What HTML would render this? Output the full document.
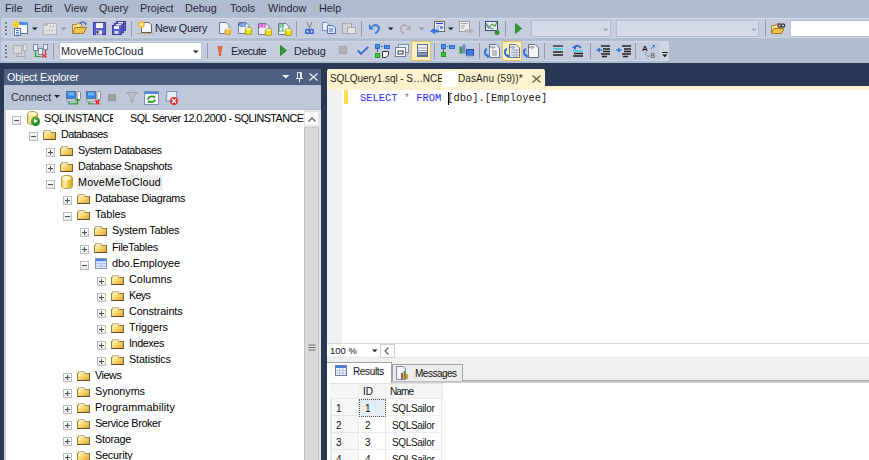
<!DOCTYPE html>
<html><head><meta charset="utf-8">
<style>
*{box-sizing:border-box}
html,body{margin:0;padding:0}
body{width:869px;height:460px;overflow:hidden;position:relative;background:#B0BCD0;font-family:"Liberation Sans",sans-serif;font-size:11px;color:#1E1E1E}
.a{position:absolute}
.t{position:absolute;white-space:pre;line-height:16px}
.grip{position:absolute;width:2px;height:2px;background:#6F7C96}
.sep{position:absolute;width:1px;background:#9AA5BF}
.dd{position:absolute;width:0;height:0;border-left:3px solid transparent;border-right:3px solid transparent;border-top:3px solid #1E1E1E}
.dd.g{border-top-color:#8A94A8}
.exp{position:absolute;width:9px;height:9px;border:1px solid #BEBEBE;background:linear-gradient(#fff,#e6e6e6)}
.exp:before{content:"";position:absolute;left:1px;top:3px;width:5px;height:1px;background:#505050}
.exp.p:after{content:"";position:absolute;left:3px;top:1px;width:1px;height:5px;background:#505050}
.fold{position:absolute;width:13px;height:8.5px;border:1px solid #9C8040;border-bottom-color:#5E4D22;border-right-color:#7A6430;background:linear-gradient(135deg,#FFF0B0,#F3CC5E 55%,#DDA83A)}
.fold:before{content:"";position:absolute;left:0px;top:-2.5px;width:5px;height:2px;border:1px solid #C8B47C;border-bottom:none;background:#F4E6B8}
.tt{position:absolute;white-space:pre;line-height:16px;color:#000;font-size:10.8px}
.cyl{position:absolute;width:11px;height:14px;border-radius:5px/3px;border:1px solid #B59A4A;background:linear-gradient(90deg,#F2D36A,#FBEFB0 35%,#F0C850 60%,#D9A21A)}
.cyl:before{content:"";position:absolute;left:0;top:0;width:9px;height:4px;border-radius:50%;background:#FCF2C2}
</style></head><body>
<span class="t" style="left:5px;top:0px;color:#25253A;font-size:10.8px">File</span>
<span class="t" style="left:34px;top:0px;color:#25253A;font-size:10.8px">Edit</span>
<span class="t" style="left:64px;top:0px;color:#25253A;font-size:10.8px">View</span>
<span class="t" style="left:99px;top:0px;color:#25253A;font-size:10.8px">Query</span>
<span class="t" style="left:140px;top:0px;color:#25253A;font-size:10.8px">Project</span>
<span class="t" style="left:185px;top:0px;color:#25253A;font-size:10.8px">Debug</span>
<span class="t" style="left:230px;top:0px;color:#25253A;font-size:10.8px">Tools</span>
<span class="t" style="left:268px;top:0px;color:#25253A;font-size:10.8px">Window</span>
<span class="t" style="left:319px;top:0px;color:#25253A;font-size:10.8px">Help</span>
<div class="a" style="left:1px;top:18px;width:868px;height:20px;background:#C4CCDD;border-radius:3px 0 0 3px;border-top:1px solid #D2D8E5;border-bottom:1px solid #CCD3E1"></div>
<div class="a" style="left:1px;top:41px;width:668px;height:20px;background:#C4CCDD;border-radius:3px;border-top:1px solid #D2D8E5;border-bottom:1px solid #CCD3E1"></div>
<div class="a" style="left:660px;top:41px;width:9px;height:20px;background:#D0D6E4;border-radius:0 3px 3px 0"></div>
<div class="grip" style="left:5px;top:22px"></div>
<div class="grip" style="left:5px;top:26px"></div>
<div class="grip" style="left:5px;top:29px"></div>
<div class="grip" style="left:5px;top:33px"></div>
<div class="grip" style="left:5px;top:45px"></div>
<div class="grip" style="left:5px;top:49px"></div>
<div class="grip" style="left:5px;top:52px"></div>
<div class="grip" style="left:5px;top:56px"></div>
<svg class="a" style="left:12px;top:20px" width="16" height="16" viewBox="0 0 16 16">
<rect x="5.5" y="2.5" width="10" height="11" fill="#F3F6FB" stroke="#5F739A"/>
<rect x="5" y="2" width="11" height="3" fill="#4D8AE6"/>
<circle cx="4" cy="4.5" r="3.2" fill="#FFE36A"/><path d="M4 0V9M0 4.5H8M1 1.5L7 7.5M7 1.5L1 7.5" stroke="#F5C000" stroke-width="0.8"/>
<rect x="2.5" y="8.5" width="6" height="7" fill="#fff" stroke="#5872A6"/>
<path d="M4 10.5H7M4 12.5H7M4 14H7" stroke="#4D7FD6"/></svg>
<svg class="a" style="left:32px;top:27px" width="6" height="4" viewBox="0 0 6 4"><path d="M0 0.5H5.5L2.75 3.2Z" fill="#1E1E1E"/></svg>
<svg class="a" style="left:43px;top:23px" width="14" height="12" viewBox="0 0 14 12"><rect x="0.5" y="0.5" width="13" height="11" fill="#E2E2E2" stroke="#B4B4B4"/><path d="M3 7.5h1M6 7.5h1M9 7.5h1M7 3.5h1M10 3.5h1M1 2h4" stroke="#8F8F8F"/></svg>
<svg class="a" style="left:61px;top:27px" width="6" height="4" viewBox="0 0 6 4"><path d="M0 0.5H5.5L2.75 3.2Z" fill="#8A94A8"/></svg>
<svg class="a" style="left:72px;top:21px" width="15" height="13" viewBox="0 0 15 13">
<path d="M0.5 3.5H4.5L5.5 2H9.5V12.5H0.5Z" fill="#F6DE8C" stroke="#9E8440"/>
<path d="M0.5 12.5L3 6.5H14.5L11.5 12.5Z" fill="#F2C24A" stroke="#A07C28"/>
<path d="M8 3C9 0.5 12 0 13.5 2.5" fill="none" stroke="#3C6CC0" stroke-width="1.2"/><path d="M12 2.5L14.5 1.5L14 4.5Z" fill="#3C6CC0"/></svg>
<svg class="a" style="left:93px;top:22px" width="13" height="13" viewBox="0 0 13 13"><rect x="0.5" y="0.5" width="12" height="12" fill="#5B5FD0" stroke="#3E3FA0"/><rect x="3" y="1" width="7" height="5" fill="#F4F4FA"/><rect x="3" y="8.5" width="6" height="4" fill="#E8E8F2"/><rect x="3.5" y="9" width="2" height="2.5" fill="#222"/></svg>
<svg class="a" style="left:112px;top:21px" width="14" height="14" viewBox="0 0 14 14">
<rect x="4.5" y="0.5" width="9" height="9" fill="#5D60CF" stroke="#3E3FA0"/>
<rect x="2.5" y="2.5" width="9" height="9" fill="#5D60CF" stroke="#3E3FA0"/>
<rect x="0.5" y="4.5" width="9" height="9" fill="#5D60CF" stroke="#3E3FA0"/>
<rect x="6" y="1" width="5" height="1.5" fill="#E8E8F6"/><rect x="4" y="3" width="5" height="1.5" fill="#E8E8F6"/>
<rect x="2" y="5" width="5" height="3" fill="#F4F4FA"/><rect x="2.5" y="10" width="4" height="3" fill="#D8D8E6"/></svg>
<div class="a" style="left:131px;top:21px;width:1px;height:16px;background:#8F9AB4"></div>
<svg class="a" style="left:137px;top:20px" width="16" height="15" viewBox="0 0 16 15">
<path d="M4.5 2.5H12L14.5 5V12.5H4.5Z" fill="#F8F8FA" stroke="#555E6E"/>
<circle cx="4.5" cy="4.5" r="3.3" fill="#FFB32A"/><circle cx="4.5" cy="4.5" r="1.8" fill="#FFF1A0"/>
<path d="M0 13.5H16" stroke="#C09030" stroke-width="1.2" stroke-dasharray="1.5 1"/><circle cx="8" cy="13.5" r="1" fill="#D8A020"/></svg>
<span class="t" style="left:155px;top:20px;font-size:10.8px;letter-spacing:-0.2px;color:#1B1B30">New Query</span>
<svg class="a" style="left:219px;top:22px" width="12" height="13" viewBox="0 0 12 13">
<path d="M0.5 0.5H7L10 3.5V11.5H0.5Z" fill="#F2F5FB" stroke="#6B7890"/>
<rect x="6" y="6.5" width="6" height="6.3" rx="3" ry="1.3" fill="#F2BE3C" stroke="#B08A2A" stroke-width="0.7"/><ellipse cx="9" cy="7" rx="2.7" ry="1.1" fill="#FBE9A8"/></svg>
<svg class="a" style="left:237px;top:21px" width="15" height="14" viewBox="0 0 15 14">
<path d="M1.5 1.5H9L12 4.5V12.5H1.5Z" fill="#F2F5FB" stroke="#6B7890"/>
<text x="1" y="6" font-family="Liberation Mono" font-size="4.5" font-weight="bold" fill="#2060C0">MDX</text>
<rect x="8.3" y="6.8" width="6.4" height="7" rx="3.2" ry="1.5" fill="#F0DA10" stroke="#8C8400" stroke-width="0.7"/><ellipse cx="11.5" cy="8.2" rx="2.6" ry="1.1" fill="#FFF8A0"/></svg>
<svg class="a" style="left:257px;top:22px" width="15" height="14" viewBox="0 0 15 14">
<path d="M1.5 1.5H9L12 4.5V12.5H1.5Z" fill="#F2F5FB" stroke="#6B7890"/>
<text x="1" y="6" font-family="Liberation Mono" font-size="4.5" font-weight="bold" fill="#D020C0">DMX</text>
<rect x="8.3" y="6.8" width="6.4" height="7" rx="3.2" ry="1.5" fill="#F0DA10" stroke="#8C8400" stroke-width="0.7"/><ellipse cx="11.5" cy="8.2" rx="2.6" ry="1.1" fill="#FFF8A0"/></svg>
<svg class="a" style="left:277px;top:22px" width="15" height="14" viewBox="0 0 15 14">
<path d="M1.5 1.5H9L12 4.5V12.5H1.5Z" fill="#F2F5FB" stroke="#6B7890"/>
<text x="1.5" y="5.5" font-family="Liberation Mono" font-size="4.5" font-weight="bold" fill="#30A050">XM</text>
<text x="1.5" y="10" font-family="Liberation Mono" font-size="4.5" font-weight="bold" fill="#30A050">LA</text>
<rect x="8.3" y="6.8" width="6.4" height="7" rx="3.2" ry="1.5" fill="#F0DA10" stroke="#8C8400" stroke-width="0.7"/><ellipse cx="11.5" cy="8.2" rx="2.6" ry="1.1" fill="#FFF8A0"/></svg>
<div class="a" style="left:296px;top:21px;width:1px;height:16px;background:#8F9AB4"></div>
<svg class="a" style="left:305px;top:22px" width="9" height="12" viewBox="0 0 9 12"><path d="M2 0L5 7M7 0L4 7" stroke="#8C8C8C" stroke-width="1.2"/><circle cx="2.5" cy="9.5" r="2" fill="none" stroke="#3A5CC8" stroke-width="1.5"/><circle cx="6.5" cy="9.5" r="2" fill="none" stroke="#3A5CC8" stroke-width="1.5"/></svg>
<svg class="a" style="left:322px;top:22px" width="14" height="12" viewBox="0 0 14 12"><path d="M0.5 0.5H5L7 2.5V8.5H0.5Z" fill="#E8EEF8" stroke="#7C90B8"/><path d="M5.5 3.5H11L13.5 6V11.5H5.5Z" fill="#DCE6F8" stroke="#4A6EC0"/><path d="M7 7H11M7 9H11" stroke="#4A6EC0"/></svg>
<svg class="a" style="left:342px;top:22px" width="14" height="12" viewBox="0 0 14 12"><rect x="0.5" y="1.5" width="9" height="10" fill="#D4D4D4" stroke="#A4A4A4"/><rect x="3" y="0.5" width="4" height="2" fill="#BDBDBD"/><rect x="5.5" y="5.5" width="8" height="6" fill="#E6E6E6" stroke="#A8A8A8"/></svg>
<div class="a" style="left:361px;top:21px;width:1px;height:16px;background:#8F9AB4"></div>
<svg class="a" style="left:369px;top:22px" width="11" height="12" viewBox="0 0 11 12"><path d="M3 4.5C7 1.5 11 4 9.5 8C9 9.5 7.5 11 6 11.5" fill="none" stroke="#3B7BDC" stroke-width="2"/><path d="M0 2V7.5H5Z" fill="#3B7BDC"/></svg>
<svg class="a" style="left:388px;top:27px" width="6" height="4" viewBox="0 0 6 4"><path d="M0 0.5H5.5L2.75 3.2Z" fill="#1E1E1E"/></svg>
<svg class="a" style="left:399px;top:22px" width="12" height="12" viewBox="0 0 12 12"><path d="M8.5 4.5C5 1.5 1 4 2 8C2.5 9.5 3.5 11 5 11.5" fill="none" stroke="#A8A8A8" stroke-width="1.6"/><path d="M11.5 3V8H6.5Z" fill="#A8A8A8"/></svg>
<svg class="a" style="left:419px;top:27px" width="6" height="4" viewBox="0 0 6 4"><path d="M0 0.5H5.5L2.75 3.2Z" fill="#8A94A8"/></svg>
<svg class="a" style="left:430px;top:21px" width="15" height="14" viewBox="0 0 15 14"><rect x="4.5" y="0.5" width="10" height="10" fill="#F4F6FA" stroke="#6C6A5C"/><path d="M6 2.5H13" stroke="#2040E0" stroke-width="1.2"/><path d="M6 5H10M6 7H9" stroke="#8CA0C0"/><rect x="10" y="5" width="3" height="3" fill="#6C8CE8"/><path d="M0 10L5 6.5V8.5H9V11.5H5V13.5Z" fill="#3E70D8"/></svg>
<svg class="a" style="left:448px;top:27px" width="6" height="4" viewBox="0 0 6 4"><path d="M0 0.5H5.5L2.75 3.2Z" fill="#1E1E1E"/></svg>
<svg class="a" style="left:459px;top:21px" width="15" height="14" viewBox="0 0 15 14"><rect x="0.5" y="0.5" width="10" height="10" fill="#ECECEC" stroke="#A0A0A0"/><path d="M2 2.5H9M2 5H6M2 7H5" stroke="#A8A8A8"/><path d="M15 10L10 6.5V8.5H6V11.5H10V13.5Z" fill="#B6B6B6"/></svg>
<div class="a" style="left:479px;top:21px;width:1px;height:16px;background:#8F9AB4"></div>
<svg class="a" style="left:485px;top:21px" width="15" height="14" viewBox="0 0 15 14"><rect x="0.5" y="0.5" width="12" height="9" fill="#E6EEF8" stroke="#3A4A70"/><path d="M1 4L4 7L7 3L10 5L12 1" fill="none" stroke="#5BA030" stroke-width="1.2"/><path d="M1 2L5 7L9 8" fill="none" stroke="#5E90E0" stroke-width="1.2"/><circle cx="12" cy="11.5" r="2.5" fill="#3C9030"/></svg>
<div class="a" style="left:505px;top:21px;width:1px;height:16px;background:#8F9AB4"></div>
<svg class="a" style="left:515px;top:23px" width="7" height="11" viewBox="0 0 7 11"><path d="M0.5 0.5L6.5 5.5L0.5 10.5Z" fill="#2E9B2E" stroke="#1E7A1E" stroke-width="0.8"/></svg>
<div class="a" style="left:531px;top:20px;width:80px;height:17px;background:#D4DAE7;border:1px solid #B4BDD0"></div>
<svg class="a" style="left:603px;top:28px" width="6" height="4" viewBox="0 0 6 4"><path d="M0 0.5H5.5L2.75 3.2Z" fill="#9CA4B4"/></svg>
<div class="a" style="left:616px;top:20px;width:143px;height:17px;background:#D4DAE7;border:1px solid #B4BDD0"></div>
<svg class="a" style="left:751px;top:28px" width="6" height="4" viewBox="0 0 6 4"><path d="M0 0.5H5.5L2.75 3.2Z" fill="#9CA4B4"/></svg>
<div class="a" style="left:765px;top:20px;width:1px;height:17px;background:#8F9AB4"></div>
<svg class="a" style="left:771px;top:21px" width="15" height="13" viewBox="0 0 15 13"><path d="M0.5 4.5H4L5 3H9V12.5H0.5Z" fill="#F6DE8C" stroke="#9E8440"/><path d="M0.5 12.5L2.5 7.5H13L10.5 12.5Z" fill="#F2C24A" stroke="#A07C28"/><circle cx="8.5" cy="4.5" r="2.3" fill="#3A3A3A"/><circle cx="12" cy="4.5" r="2.3" fill="#3A3A3A"/><circle cx="8.5" cy="4.5" r="1" fill="#ddd"/><circle cx="12" cy="4.5" r="1" fill="#ddd"/></svg>
<div class="a" style="left:790px;top:20px;width:79px;height:17px;background:#fff;border:1px solid #B8C0D0;border-right:none"></div>
<svg class="a" style="left:13px;top:44px" width="15" height="14" viewBox="0 0 15 14"><rect x="0.5" y="1.5" width="8" height="8" fill="#D8D8D8" stroke="#B0B0B0"/><rect x="10.5" y="0.5" width="3" height="6" fill="#E4E4E4" stroke="#B0B0B0"/><path d="M4 9.5V12.5H12V6.5" fill="none" stroke="#A8A8A8"/></svg>
<svg class="a" style="left:33px;top:44px" width="15" height="14" viewBox="0 0 15 14"><rect x="0.5" y="0.5" width="4" height="6" fill="#F2F2F2" stroke="#7A8AA0"/><rect x="5.5" y="4.5" width="4" height="6" fill="#F2F2F2" stroke="#7A8AA0"/><rect x="10.5" y="0.5" width="4" height="5" fill="#F2F2F2" stroke="#7A8AA0"/><path d="M2.5 7V12.5H8" fill="none" stroke="#2E9E2E" stroke-width="1.2"/><path d="M9 10L13.5 13.5M13.5 10L9 13.5M12.5 6V10" stroke="#E02020" stroke-width="1.2"/></svg>
<div class="a" style="left:53px;top:43px;width:1px;height:16px;background:#8F9AB4"></div>
<div class="a" style="left:59px;top:42px;width:143px;height:18px;background:#fff;border:1px solid #B8C0D0"></div>
<span class="t" style="left:61px;top:43px;font-size:10.8px;letter-spacing:0.1px;color:#1B1B30">MoveMeToCloud</span>
<svg class="a" style="left:193px;top:50px" width="6" height="4" viewBox="0 0 6 4"><path d="M0 0.5H5.5L2.75 3.2Z" fill="#1E1E1E"/></svg>
<div class="a" style="left:207px;top:43px;width:1px;height:16px;background:#8F9AB4"></div>
<svg class="a" style="left:217px;top:46px" width="6" height="10" viewBox="0 0 6 10"><path d="M0.8 0.5H5.2L3.7 6.8H2.3Z" fill="#F2672E" stroke="#D24A1A" stroke-width="0.5"/><circle cx="3" cy="8.6" r="1.3" fill="#E8501E"/></svg>
<span class="t" style="left:231px;top:43px;font-size:10.8px;letter-spacing:-0.6px;color:#1B1B30">Execute</span>
<svg class="a" style="left:280px;top:45px" width="7" height="11" viewBox="0 0 7 11"><path d="M0.5 0.5L6.5 5.5L0.5 10.5Z" fill="#2E9B2E" stroke="#1E7A1E" stroke-width="0.8"/></svg>
<span class="t" style="left:294px;top:43px;font-size:10.8px;color:#1B1B30">Debug</span>
<svg class="a" style="left:339px;top:46px" width="8" height="8" viewBox="0 0 8 8"><rect x="0.5" y="0.5" width="7" height="7" fill="#B2B2B2" stroke="#A4A4A4"/></svg>
<svg class="a" style="left:357px;top:46px" width="12" height="9" viewBox="0 0 12 9"><path d="M0.8 4.5L4 7.8L11.2 0.8" fill="none" stroke="#3A68C8" stroke-width="1.8"/></svg>
<svg class="a" style="left:375px;top:44px" width="15" height="14" viewBox="0 0 15 14"><rect x="0.5" y="0.5" width="4" height="4" fill="#4A90E0" stroke="#2E6CC0"/><rect x="9.5" y="1.5" width="5" height="3" fill="#4A90E0" stroke="#2E6CC0"/><path d="M6 2.5H8" stroke="#2E6CC0"/><path d="M2.5 5V8" stroke="#555"/><rect x="0.5" y="9.5" width="4" height="4" fill="#33CC33" stroke="#229922"/><path d="M7.5 7.5H13.5V11L10.5 13.5H7.5Z" fill="#F8F8F8" stroke="#333"/></svg>
<svg class="a" style="left:395px;top:44px" width="14" height="13" viewBox="0 0 14 13"><rect x="3.5" y="0.5" width="10" height="8" fill="#E8EEF8" stroke="#7A8CAC"/><rect x="0.5" y="3.5" width="10" height="9" fill="#F4F6FA" stroke="#6A7C9C"/><rect x="3" y="7" width="5" height="3" fill="#fff" stroke="#333"/></svg>
<div class="a" style="left:411px;top:41px;width:20px;height:20px;background:#FFF0C0;border:1px solid #E8C060"></div>
<svg class="a" style="left:417px;top:44px" width="11" height="13" viewBox="0 0 11 13"><rect x="0.5" y="0.5" width="10" height="12" fill="#F4F6FA" stroke="#5A6C90"/><path d="M1 4H10M1 6.5H10" stroke="#9AA6C0"/><rect x="1" y="8" width="9" height="4" fill="#5A6C90"/><path d="M1 10H10" stroke="#C0C8DA"/></svg>
<div class="a" style="left:434px;top:43px;width:1px;height:16px;background:#8F9AB4"></div>
<svg class="a" style="left:441px;top:44px" width="14" height="13" viewBox="0 0 14 13"><rect x="0.5" y="0.5" width="4" height="4" fill="#4A90E0" stroke="#2E6CC0"/><rect x="8.5" y="1.5" width="5" height="3" fill="#4A90E0" stroke="#2E6CC0"/><path d="M6 2.5H7.5" stroke="#2E6CC0"/><path d="M2.5 5V8" stroke="#555"/><rect x="0.5" y="8.5" width="4" height="4" fill="#33CC33" stroke="#229922"/></svg>
<svg class="a" style="left:459px;top:44px" width="15" height="14" viewBox="0 0 15 14"><rect x="0.5" y="2.5" width="3" height="7" fill="#3A9A3A"/><rect x="3.5" y="0.5" width="3" height="9" fill="#6A8AD0"/><rect x="7.5" y="5.5" width="7" height="6" fill="#3C7CE8" stroke="#2A4A90"/><rect x="6.5" y="11.5" width="8" height="2" fill="#A8B8D0"/></svg>
<div class="a" style="left:479px;top:43px;width:1px;height:16px;background:#8F9AB4"></div>
<svg class="a" style="left:484px;top:44px" width="16" height="14" viewBox="0 0 16 14"><path d="M5.5 0.5H12L15.5 4V13.5H5.5Z" fill="#F2F4F8" stroke="#6A7484"/><text x="5.5" y="4" font-family="Liberation Mono" font-size="3.5" fill="#333">SQL</text><path d="M8 7H13M8 9H13M8 11H13" stroke="#888"/><path d="M3 5C0 6 0 11 4 12" fill="none" stroke="#3070D8" stroke-width="2"/><path d="M3 10L6.5 12.5L3 14Z" fill="#3070D8"/></svg>
<div class="a" style="left:502px;top:41px;width:20px;height:20px;background:#FFF0C0;border:1px solid #E8C060"></div>
<svg class="a" style="left:504px;top:44px" width="16" height="14" viewBox="0 0 16 14"><path d="M5.5 0.5H12L15.5 4V13.5H5.5Z" fill="#F2F4F8" stroke="#6A7484"/><text x="5.5" y="4" font-family="Liberation Mono" font-size="3.5" fill="#333">SQL</text><path d="M7 6H15M7 8.5H15M7 11H15M10 5V13M12.5 5V13" stroke="#9AA8C8"/><path d="M3 5C0 6 0 11 4 12" fill="none" stroke="#3070D8" stroke-width="2"/><path d="M3 10L6.5 12.5L3 14Z" fill="#3070D8"/></svg>
<svg class="a" style="left:523px;top:44px" width="16" height="14" viewBox="0 0 16 14"><path d="M5.5 0.5H12L15.5 4V13.5H5.5Z" fill="#F2F4F8" stroke="#6A7484"/><text x="5.5" y="4" font-family="Liberation Mono" font-size="3.5" fill="#333">SQL</text><path d="M3 5C0 6 0 11 4 12" fill="none" stroke="#3070D8" stroke-width="2"/><path d="M3 10L6.5 12.5L3 14Z" fill="#3070D8"/></svg>
<div class="a" style="left:544px;top:43px;width:1px;height:16px;background:#8F9AB4"></div>
<svg class="a" style="left:552px;top:45px" width="12" height="11" viewBox="0 0 12 11"><path d="M1 1H11" stroke="#222" stroke-width="1.3"/><path d="M1 4H11" stroke="#20D0E0" stroke-width="1.3"/><path d="M1 7H11M1 10H11" stroke="#222" stroke-width="1.3"/></svg>
<svg class="a" style="left:572px;top:45px" width="12" height="12" viewBox="0 0 12 12"><path d="M9 3C7 0 3 0 2 3" fill="none" stroke="#2C60D0" stroke-width="1.6"/><path d="M0 2L3.5 5L4 1Z" fill="#2C60D0"/><path d="M1 6H11" stroke="#20D0E0" stroke-width="1.3"/><path d="M2 8.5H11M1 11H11" stroke="#222" stroke-width="1.3"/></svg>
<div class="a" style="left:590px;top:43px;width:1px;height:16px;background:#8F9AB4"></div>
<svg class="a" style="left:596px;top:45px" width="14" height="13" viewBox="0 0 14 13"><path d="M5 1H14M7 4H14M7 6.5H14M5 9H14M6 11.5H11" stroke="#222" stroke-width="1.4"/><path d="M0 5L4 2.5V7.5Z" fill="#3A7AD8"/><path d="M3 5H6" stroke="#3A7AD8" stroke-width="1.4"/></svg>
<svg class="a" style="left:616px;top:45px" width="15" height="13" viewBox="0 0 15 13"><path d="M6 1H15M8 4H15M8 6.5H15M6 9H15M7 11.5H12" stroke="#222" stroke-width="1.4"/><path d="M6 5L2 2.5V7.5Z" fill="#3A7AD8"/><path d="M0 5H3" stroke="#3A7AD8" stroke-width="1.4"/></svg>
<div class="a" style="left:635px;top:43px;width:1px;height:16px;background:#8F9AB4"></div>
<svg class="a" style="left:642px;top:44px" width="14" height="14" viewBox="0 0 14 14"><text x="0" y="7" font-family="Liberation Sans" font-size="8" font-weight="bold" fill="#222">A</text><path d="M9 5L12 1.5M10.5 1.5H12.5V3.5" stroke="#3A6AC0" fill="none"/><path d="M4 8C3 11 5 13 8 12" fill="none" stroke="#3A6AC0" stroke-dasharray="1 1"/><text x="8.5" y="13.5" font-family="Liberation Sans" font-size="7" fill="#555">B</text></svg>
<div class="a" style="left:662px;top:52px;width:6px;height:1px;background:#1E1E1E"></div>
<svg class="a" style="left:662px;top:54px" width="6" height="4" viewBox="0 0 6 4"><path d="M0 0.5H5.5L2.75 3.2Z" fill="#1E1E1E"/></svg>
<div class="a" style="left:0;top:63px;width:869px;height:397px;background:#293955"></div>
<div class="a" style="left:4px;top:69px;width:317px;height:16px;background:#4D6082"></div>
<span class="t" style="left:7px;top:69px;color:#fff;font-size:10.8px;letter-spacing:-0.18px">Object Explorer</span>
<div class="a" style="left:4px;top:85px;width:317px;height:25px;background:#BEC7D9;border-bottom:1px solid #B9BFCC"></div>
<span class="t" style="left:11px;top:89px;font-size:10.8px;color:#2A3040">Connect</span>
<div class="dd" style="left:54px;top:95px"></div>
<svg class="a" style="left:66px;top:91px" width="15" height="14" viewBox="0 0 15 14"><rect x="0.5" y="0.5" width="9" height="7" fill="#2F86F0" stroke="#5A7090"/><rect x="2" y="1.5" width="6" height="3" fill="#6CB2FF"/><rect x="0.5" y="8" width="9" height="2.5" fill="#C8D0DC" stroke="#8A96A8" stroke-width="0.6"/><rect x="11" y="0.5" width="3.5" height="8" rx="1" fill="#F4F4F4" stroke="#8A8A8A"/><path d="M3 10.5V12.8H11.5V9.5" fill="none" stroke="#2E9E2E" stroke-width="1.3"/><path d="M9 10L11.5 7L14 10Z" fill="#2E9E2E"/></svg>
<svg class="a" style="left:86px;top:91px" width="15" height="14" viewBox="0 0 15 14"><rect x="0.5" y="0.5" width="9" height="7" fill="#2F86F0" stroke="#5A7090"/><rect x="2" y="1.5" width="6" height="3" fill="#6CB2FF"/><rect x="0.5" y="8" width="9" height="2.5" fill="#C8D0DC" stroke="#8A96A8" stroke-width="0.6"/><rect x="11" y="0.5" width="3.5" height="8" rx="1" fill="#F4F4F4" stroke="#8A8A8A"/><path d="M3 10.5V12.8H8" fill="none" stroke="#2E9E2E" stroke-width="1.3"/><path d="M9.5 9L13.5 13.5M13.5 9L9.5 13.5" stroke="#F02020" stroke-width="1.5"/></svg>
<svg class="a" style="left:108px;top:94px" width="8" height="7" viewBox="0 0 8 7"><rect x="0.5" y="0.5" width="7" height="6" fill="#A0A0A0" stroke="#969696"/></svg>
<svg class="a" style="left:126px;top:92px" width="12" height="11" viewBox="0 0 12 11"><path d="M0.5 0.5H11.5L7 5V10.5H5V5Z" fill="#BFC3C8" stroke="#A0A4AA"/></svg>
<svg class="a" style="left:144px;top:91px" width="15" height="14" viewBox="0 0 15 14"><rect x="0.5" y="0.5" width="14" height="13" fill="#F8FAFE" stroke="#7890B8"/><rect x="1" y="1" width="13" height="2" fill="#4A88E8"/><path d="M4 8.5C4 5.5 8.5 4.5 10.5 6.5" fill="none" stroke="#3C9A28" stroke-width="1.8"/><path d="M9 5L11.5 4.5L11 7.5Z" fill="#3C9A28"/><path d="M11 8.5C11 11 6.5 12 4.5 10" fill="none" stroke="#3C9A28" stroke-width="1.8"/><path d="M6 11.5L3.5 12L4 9Z" fill="#3C9A28"/></svg>
<svg class="a" style="left:164px;top:91px" width="15" height="14" viewBox="0 0 15 14"><path d="M2.5 0.5H13.5C12 2 12 4 13 5L12 10H1.5C3 8 3 3 2.5 0.5Z" fill="#E8EEF6" stroke="#7A90B0"/><circle cx="10" cy="10" r="4" fill="#E03030"/><path d="M8 8L12 12M12 8L8 12" stroke="#fff" stroke-width="1.3"/></svg>
<svg class="a" style="left:282px;top:75px" width="8" height="4" viewBox="0 0 8 4"><path d="M0 0H7.5L3.75 3.5Z" fill="#E8ECF4"/></svg>
<svg class="a" style="left:296px;top:72px" width="7" height="11" viewBox="0 0 7 11"><path d="M1.5 0.5H5.5V6.5H1.5ZM0 6.5H7M3.5 6.5V10.5" fill="none" stroke="#E8ECF4"/><rect x="4" y="1" width="1.5" height="5.5" fill="#E8ECF4"/></svg>
<svg class="a" style="left:309px;top:73px" width="9" height="8" viewBox="0 0 9 8"><path d="M0.5 0.5L8.5 7.5M8.5 0.5L0.5 7.5" stroke="#E8ECF4" stroke-width="1.3"/></svg>
<div class="a" style="left:4px;top:110px;width:317px;height:350px;background:#fff;border-left:2px solid #D0D4DC"></div>
<div class="exp" style="left:12px;top:116px"></div>
<div class="cyl" style="left:27px;top:111px"></div>
<div class="a" style="left:31px;top:117px;width:9px;height:9px;border-radius:50%;background:radial-gradient(circle at 40% 35%,#5DBB4A,#1F8A1F 60%,#0F5E10)"></div>
<div class="a" style="left:34px;top:119px;width:0;height:0;border-top:2.5px solid transparent;border-bottom:2.5px solid transparent;border-left:4px solid #fff"></div>
<div class="a" style="left:44px;top:110px;width:69px;height:16px;overflow:hidden"><span class="tt" style="left:0;top:0;letter-spacing:-0.3px">SQLINSTANCE</span></div>
<span class="tt" style="left:130px;top:110px;letter-spacing:-0.55px">SQL Server 12.0.2000 - SQLINSTANCE</span>
<div class="exp" style="left:29px;top:132px"></div>
<div class="fold" style="left:43px;top:131.5px"></div>
<span class="tt" style="left:61px;top:126px;letter-spacing:-0.56px">Databases</span>
<div class="exp p" style="left:46px;top:148px"></div>
<div class="fold" style="left:60px;top:147.5px"></div>
<span class="tt" style="left:78px;top:142px;letter-spacing:-0.45px">System Databases</span>
<div class="exp p" style="left:46px;top:164px"></div>
<div class="fold" style="left:60px;top:163.5px"></div>
<span class="tt" style="left:78px;top:158px;letter-spacing:-0.35px">Database Snapshots</span>
<div class="exp" style="left:46px;top:180px"></div>
<div class="cyl" style="left:61px;top:175px;width:12px"></div>
<div class="a" style="left:77px;top:175px;width:86px;height:15px;background:#F0F0F0"></div>
<span class="tt" style="left:78px;top:174px;letter-spacing:0.15px">MoveMeToCloud</span>
<div class="exp p" style="left:63px;top:196px"></div>
<div class="fold" style="left:77px;top:195.5px"></div>
<span class="tt" style="left:95px;top:190px;letter-spacing:-0.31px">Database Diagrams</span>
<div class="exp" style="left:63px;top:212px"></div>
<div class="fold" style="left:77px;top:211.5px"></div>
<span class="tt" style="left:95px;top:206px;letter-spacing:-0.08px">Tables</span>
<div class="exp p" style="left:80px;top:228px"></div>
<div class="fold" style="left:94px;top:227.5px"></div>
<span class="tt" style="left:112px;top:222px;letter-spacing:-0.22px">System Tables</span>
<div class="exp p" style="left:80px;top:245px"></div>
<div class="fold" style="left:94px;top:244.5px"></div>
<span class="tt" style="left:112px;top:239px;letter-spacing:-0.28px">FileTables</span>
<div class="exp" style="left:80px;top:261px"></div>
<svg class="a" style="left:95px;top:258px" width="12" height="11" viewBox="0 0 12 11"><rect x="0.5" y="0.5" width="11" height="10" fill="#E4ECFA" stroke="#7F95BE"/><rect x="1" y="1" width="10" height="2.5" fill="#4C82E4"/><path d="M1 5.5H11M1 8H11M6 3.5V10" stroke="#A9BCE0"/><path d="M1 4H11" stroke="#FFFFFF" stroke-width="0.6"/></svg>
<span class="tt" style="left:112px;top:255px;letter-spacing:-0.09px">dbo.Employee</span>
<div class="exp p" style="left:97px;top:277px"></div>
<div class="fold" style="left:111px;top:276.5px"></div>
<span class="tt" style="left:129px;top:271px;letter-spacing:0.05px">Columns</span>
<div class="exp p" style="left:97px;top:293px"></div>
<div class="fold" style="left:111px;top:292.5px"></div>
<span class="tt" style="left:129px;top:287px;letter-spacing:-0.73px">Keys</span>
<div class="exp p" style="left:97px;top:309px"></div>
<div class="fold" style="left:111px;top:308.5px"></div>
<span class="tt" style="left:129px;top:303px;letter-spacing:-0.1px">Constraints</span>
<div class="exp p" style="left:97px;top:325px"></div>
<div class="fold" style="left:111px;top:324.5px"></div>
<span class="tt" style="left:129px;top:319px;letter-spacing:-0.03px">Triggers</span>
<div class="exp p" style="left:97px;top:341px"></div>
<div class="fold" style="left:111px;top:340.5px"></div>
<span class="tt" style="left:129px;top:335px;letter-spacing:-0.42px">Indexes</span>
<div class="exp p" style="left:97px;top:357px"></div>
<div class="fold" style="left:111px;top:356.5px"></div>
<span class="tt" style="left:129px;top:351px;letter-spacing:-0.14px">Statistics</span>
<div class="exp p" style="left:63px;top:373px"></div>
<div class="fold" style="left:77px;top:372.5px"></div>
<span class="tt" style="left:95px;top:367px;letter-spacing:-0.43px">Views</span>
<div class="exp p" style="left:63px;top:389px"></div>
<div class="fold" style="left:77px;top:388.5px"></div>
<span class="tt" style="left:95px;top:383px;letter-spacing:-0.06px">Synonyms</span>
<div class="exp p" style="left:63px;top:405px"></div>
<div class="fold" style="left:77px;top:404.5px"></div>
<span class="tt" style="left:95px;top:399px;letter-spacing:0.13px">Programmability</span>
<div class="exp p" style="left:63px;top:421px"></div>
<div class="fold" style="left:77px;top:420.5px"></div>
<span class="tt" style="left:95px;top:415px;letter-spacing:-0.34px">Service Broker</span>
<div class="exp p" style="left:63px;top:437px"></div>
<div class="fold" style="left:77px;top:436.5px"></div>
<span class="tt" style="left:95px;top:431px;letter-spacing:-0.27px">Storage</span>
<div class="exp p" style="left:63px;top:453px"></div>
<div class="fold" style="left:77px;top:452.5px"></div>
<span class="tt" style="left:95px;top:447px;letter-spacing:-0.2px">Security</span>
<div class="a" style="left:304px;top:110px;width:17px;height:350px;background:#E4E6EC"></div>
<div class="a" style="left:304px;top:111px;width:15px;height:15px;background:#fff;border:1px solid #E4E4E4"></div>
<div class="a" style="left:304px;top:127px;width:15px;height:333px;background:#DADADA;border-left:1px solid #BDBDBD;border-right:1px solid #BDBDBD;border-top:1px solid #C8C8C8"></div>
<svg class="a" style="left:308px;top:116.5px" width="8" height="5" viewBox="0 0 8 5"><path d="M0.5 4.5L4 1L7.5 4.5" fill="none" stroke="#606060" stroke-width="1.3"/></svg>
<svg class="a" style="left:308px;top:343px" width="8" height="9" viewBox="0 0 8 9"><path d="M0.5 2H7.5M0.5 4.5H7.5M0.5 7H7.5" stroke="#6E6E6E" stroke-width="1.2"/></svg>
<div class="a" style="left:327px;top:69px;width:218px;height:18px;background:#FFF3CF;border-radius:2px 2px 0 0"></div>
<div class="a" style="left:327px;top:86px;width:542px;height:4px;background:#FFF3CF"></div>
<div class="a" style="left:327px;top:90px;width:542px;height:253px;background:#fff"></div>
<div class="a" style="left:327px;top:90px;width:15px;height:253px;background:#F0F0F0"></div>
<div class="a" style="left:344px;top:90px;width:4px;height:14px;background:#FFE04A"></div>
<span class="t" style="left:360px;top:90px;font-family:'Liberation Mono',monospace;font-size:10.4px;letter-spacing:0px;color:#222"><span style="color:#2B2BFF">SELECT</span> <span style="color:#808080">*</span> <span style="color:#2B2BFF">FROM</span> [dbo].[Employee]</span>
<span class="t" style="left:330px;top:70.5px;font-size:10px;letter-spacing:-0.06px">SQLQuery1.sql - S…NCE</span>
<div class="a" style="left:442px;top:71px;width:16px;height:16px;background:#fff"></div>
<span class="t" style="left:458px;top:70.5px;font-size:10px;letter-spacing:0.1px">DasAnu (59))*</span>
<svg class="a" style="left:532px;top:75px" width="9" height="8" viewBox="0 0 9 8"><path d="M0.5 0.5L8.5 7.5M8.5 0.5L0.5 7.5" stroke="#6E6446" stroke-width="1.4"/></svg>
<div class="a" style="left:448px;top:92px;width:1px;height:13px;background:#000"></div>
<div class="a" style="left:327px;top:343px;width:542px;height:117px;background:#F0F0F0"></div>
<div class="a" style="left:327px;top:343px;width:542px;height:15px;background:linear-gradient(#fff 0,#fff 12px,#E4E4E4 14px);border-top:1px solid #D6D6D6"></div>
<span class="t" style="left:330px;top:343px;font-size:9.5px;letter-spacing:0px;color:#111">100 %</span>
<svg class="a" style="left:372px;top:349px" width="6" height="4" viewBox="0 0 6 4"><path d="M0 0.5H5.5L2.75 3.2Z" fill="#1E1E1E"/></svg>
<div class="a" style="left:380px;top:344px;width:15px;height:14px;background:#fff;border:1px solid #D0D0D0"></div>
<svg class="a" style="left:384px;top:347px" width="6" height="8" viewBox="0 0 6 8"><path d="M4.5 0.5L1 4L4.5 7.5" fill="none" stroke="#555" stroke-width="1.1"/></svg>
<div class="a" style="left:327px;top:380px;width:542px;height:3px;background:linear-gradient(#A8A8A8,#D8D8D8)"></div>
<div class="a" style="left:392px;top:364px;width:71px;height:17px;background:#ECECEC;border:1px solid #A0A0A0;border-bottom:none"></div>
<div class="a" style="left:327px;top:362px;width:65px;height:21px;background:#fff;border:1px solid #A0A0A0;border-bottom:none;border-left:none"></div>
<svg class="a" style="left:335px;top:365px" width="12" height="11" viewBox="0 0 12 11"><rect x="0.5" y="0.5" width="11" height="10" fill="#F4F6FA" stroke="#6A7AA0"/><rect x="1" y="1" width="10" height="2" fill="#4A7EE0"/><path d="M1 5.5H11M1 8H11M4.5 3V10M8 3V10" stroke="#B4C0D8"/></svg>
<span class="t" style="left:353px;top:364px;font-size:10px;letter-spacing:-0.35px;color:#111">Results</span>
<svg class="a" style="left:396px;top:366px" width="13" height="14" viewBox="0 0 13 14"><path d="M0.5 0.5H7L9.5 3V13.5H0.5Z" fill="#F4F6FA" stroke="#7A8AA8"/><rect x="5" y="7" width="2" height="6" fill="#D84040"/><rect x="7.5" y="5" width="2" height="8" fill="#4AA040"/><rect x="10" y="8" width="2" height="5" fill="#E0A020"/></svg>
<span class="t" style="left:415px;top:366px;font-size:10px;letter-spacing:-0.5px;color:#111">Messages</span>
<div class="a" style="left:327px;top:383px;width:542px;height:77px;background:#fff"></div>
<div class="a" style="left:330px;top:383px;width:2px;height:77px;background:#E4E4E4"></div>
<div class="a" style="left:330px;top:383px;width:113px;height:16px;background:#F5F5F5;border-top:1px solid #E0E0E0;border-bottom:1px solid #E6E6E6"></div>
<div class="a" style="left:358px;top:384px;width:1px;height:76px;background:#E8E8E8"></div>
<div class="a" style="left:385px;top:384px;width:1px;height:76px;background:#E8E8E8"></div>
<div class="a" style="left:441px;top:399px;width:1px;height:61px;background:#E8E8E8"></div>
<div class="a" style="left:442px;top:384px;width:1px;height:15px;background:#E8E8E8"></div>
<span class="t" style="left:363px;top:384px;font-size:10px;color:#111">ID</span>
<span class="t" style="left:390px;top:384px;font-size:10px;letter-spacing:-0.9px;color:#111">Name</span>
<div class="a" style="left:332px;top:415px;width:110px;height:1px;background:#EDEDED"></div>
<div class="a" style="left:332px;top:399px;width:26px;height:17px;background:#F7F7F7;border-bottom:1px solid #E4E4E4"></div>
<span class="t" style="left:336px;top:401px;font-size:10px;color:#111">1</span>
<span class="t" style="left:365px;top:401px;font-size:10px;color:#111">1</span>
<span class="t" style="left:392px;top:401px;font-size:10px;letter-spacing:-0.35px;color:#111">SQLSailor</span>
<div class="a" style="left:332px;top:432px;width:110px;height:1px;background:#EDEDED"></div>
<div class="a" style="left:332px;top:416px;width:26px;height:17px;background:#F7F7F7;border-bottom:1px solid #E4E4E4"></div>
<span class="t" style="left:336px;top:418px;font-size:10px;color:#111">2</span>
<span class="t" style="left:365px;top:418px;font-size:10px;color:#111">2</span>
<span class="t" style="left:392px;top:418px;font-size:10px;letter-spacing:-0.35px;color:#111">SQLSailor</span>
<div class="a" style="left:332px;top:449px;width:110px;height:1px;background:#EDEDED"></div>
<div class="a" style="left:332px;top:433px;width:26px;height:17px;background:#F7F7F7;border-bottom:1px solid #E4E4E4"></div>
<span class="t" style="left:336px;top:435px;font-size:10px;color:#111">3</span>
<span class="t" style="left:365px;top:435px;font-size:10px;color:#111">3</span>
<span class="t" style="left:392px;top:435px;font-size:10px;letter-spacing:-0.35px;color:#111">SQLSailor</span>
<div class="a" style="left:332px;top:466px;width:110px;height:1px;background:#EDEDED"></div>
<div class="a" style="left:332px;top:450px;width:26px;height:17px;background:#F7F7F7;border-bottom:1px solid #E4E4E4"></div>
<span class="t" style="left:336px;top:452px;font-size:10px;color:#111">4</span>
<span class="t" style="left:365px;top:452px;font-size:10px;color:#111">4</span>
<span class="t" style="left:392px;top:452px;font-size:10px;letter-spacing:-0.35px;color:#111">SQLSailor</span>
<div class="a" style="left:359px;top:399px;width:27px;height:18px;background:#E6ECF4;border:1px dotted #555"></div>
<span class="t" style="left:365px;top:401px;font-size:10px;color:#111">1</span>
</body></html>
